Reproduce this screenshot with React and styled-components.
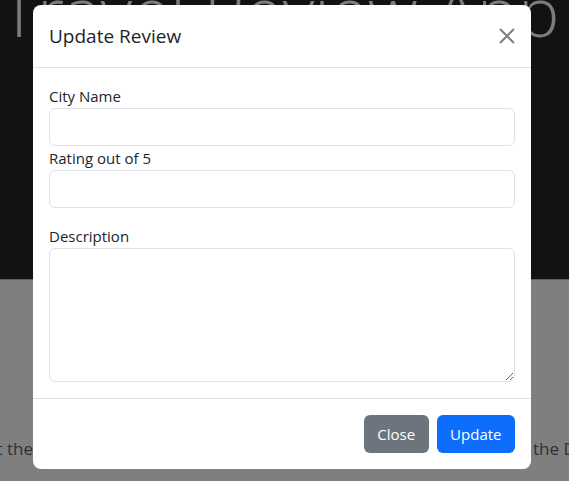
import React from "react";
import styled, { createGlobalStyle } from "styled-components";

const GlobalStyle = createGlobalStyle`
  html, body {
    margin: 0;
    padding: 0;
    overflow: hidden;
  }
  body {
    font-family: "Open Sans", "Noto Sans", sans-serif;
    font-size: 16px;
    color: #212529;
    background: #fff;
  }
  * {
    box-sizing: border-box;
  }
`;

const Hero = styled.header`
  background: #212529;
  height: 280px;
  border-bottom: 1px solid #ffc107;
  overflow: hidden;
`;

const HeroTitle = styled.h1`
  margin: -24px 0 0;
  padding-left: 1px;
  font-size: 69px;
  font-weight: 300;
  line-height: 1;
  color: #f8f9fa;
  white-space: nowrap;
`;

const Intro = styled.section`
  padding-top: 156px;
`;

const Lead = styled.p`
  margin: 0;
  display: grid;
  grid-template-columns: 33px 500px 1fr;
  font-size: 17px;
  line-height: 1.5;
  color: #5c636a;
  white-space: nowrap;
`;

const LeadPart = styled.span`
  display: flex;
  justify-content: ${(p) => (p.$end ? "flex-end" : "flex-start")};
  overflow: hidden;
`;

const Backdrop = styled.div`
  position: fixed;
  inset: 0;
  background: rgba(0, 0, 0, 0.5);
`;

const Dialog = styled.div`
  position: fixed;
  top: 5px;
  left: 33px;
  width: 498px;
  background: #fff;
  border-radius: 8px;
  display: flex;
  flex-direction: column;
`;

const DialogHeader = styled.div`
  display: flex;
  align-items: center;
  justify-content: space-between;
  padding: 16px;
  height: 63px;
  border-bottom: 1px solid #dee2e6;
`;

const DialogTitle = styled.h5`
  margin: 0;
  font-size: 19px;
  font-weight: 500;
  line-height: 1.5;
`;

const CloseIcon = styled.button`
  width: 16px;
  height: 16px;
  padding: 0;
  border: 0;
  background: none;
  opacity: 0.5;
  display: flex;
  cursor: pointer;
`;

const DialogBody = styled.form`
  padding: 16px;
  display: flex;
  flex-direction: column;
`;

const Label = styled.label`
  display: block;
  line-height: 24px;
  font-size: 15px;
  margin-top: ${(p) => (p.$spaced ? "16px" : "0")};
`;

const Input = styled.input`
  display: block;
  width: 100%;
  height: 38px;
  padding: 6px 12px;
  font: inherit;
  border: 1px solid #dee2e6;
  border-radius: 6px;
  background: #fff;
`;

const TextArea = styled.textarea`
  display: block;
  width: 100%;
  height: 134px;
  padding: 6px 12px;
  font: inherit;
  border: 1px solid #dee2e6;
  border-radius: 6px;
  background: #fff;
`;

const DialogFooter = styled.div`
  display: flex;
  justify-content: flex-end;
  gap: 8px;
  padding: 16px;
  border-top: 1px solid #dee2e6;
`;

const Button = styled.button`
  height: 38px;
  padding: 0 13.5px;
  border: 0;
  border-radius: 6px;
  font-family: inherit;
  font-size: 15px;
  color: #fff;
  background: ${(p) => (p.$variant === "primary" ? "#0d6efd" : "#6c757d")};
  cursor: pointer;
`;

export default function App() {
  return (
    <>
      <GlobalStyle />
      <Hero>
        <HeroTitle>Travel Review App</HeroTitle>
      </Hero>
      <Intro>
        <Lead>
          <LeadPart $end>Find out what travellers think about the</LeadPart>
          <LeadPart>cities they visited, and add your own review with</LeadPart>
          <LeadPart>the Dashboard</LeadPart>
        </Lead>
      </Intro>
      <Backdrop />
      <Dialog role="dialog">
        <DialogHeader>
          <DialogTitle>Update Review</DialogTitle>
          <CloseIcon aria-label="Close">
            <svg width="16" height="16" viewBox="0 0 16 16">
              <path d="M1 1L15 15M15 1L1 15" stroke="#000" strokeWidth="2" />
            </svg>
          </CloseIcon>
        </DialogHeader>
        <DialogBody>
          <Label>City Name</Label>
          <Input type="text" />
          <Label>Rating out of 5</Label>
          <Input type="text" />
          <Label $spaced>Description</Label>
          <TextArea />
        </DialogBody>
        <DialogFooter>
          <Button type="button">Close</Button>
          <Button type="button" $variant="primary">
            Update
          </Button>
        </DialogFooter>
      </Dialog>
    </>
  );
}
